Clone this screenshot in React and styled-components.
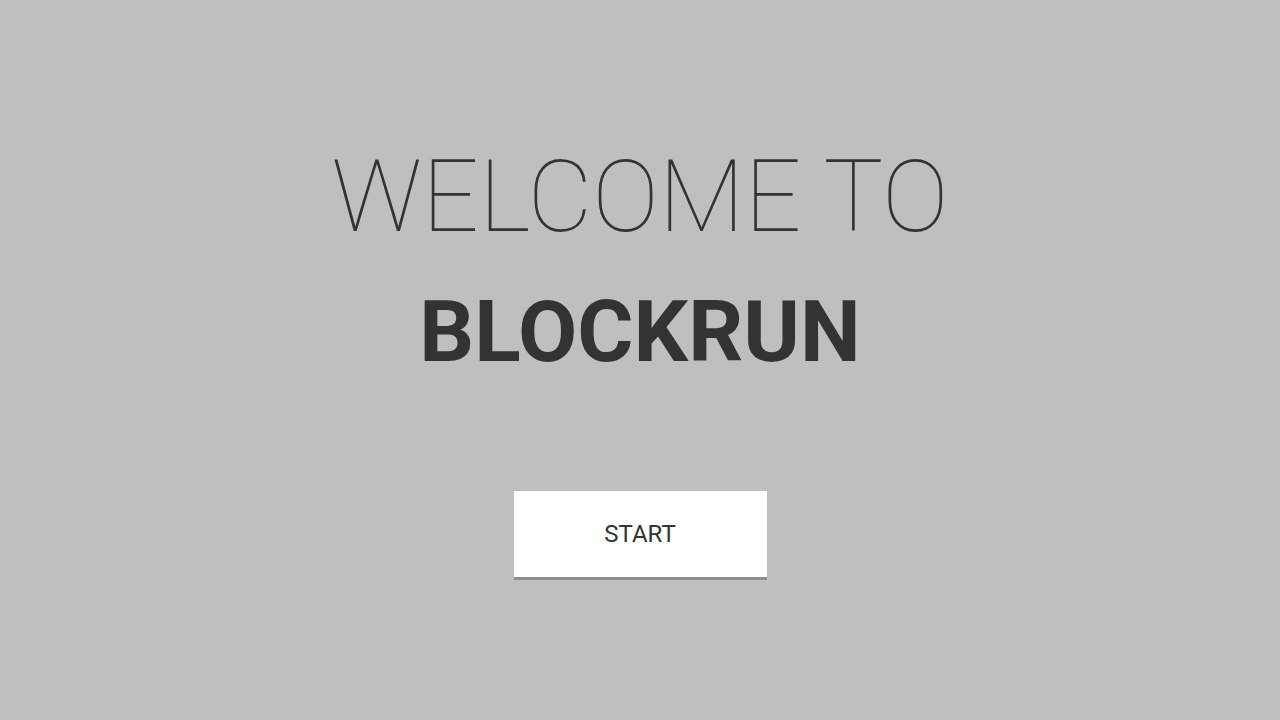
import styled, { createGlobalStyle } from "styled-components";

const Global = createGlobalStyle`
  html, body {
    margin: 0;
    padding: 0;
    background: #bfbfbf;
  }
  body {
    font-family: Roboto, "Liberation Sans", sans-serif;
  }
`;

const Screen = styled.div`
  width: 100vw;
  height: 100vh;
  background: #bfbfbf;
  display: flex;
  flex-direction: column;
  align-items: center;
  padding-top: 147px;
  box-sizing: border-box;
  color: #333333;
`;

const Welcome = styled.h1`
  margin: 0;
  font-family: Roboto, "Liberation Sans", sans-serif;
  font-weight: 100;
  font-size: 100px;
  line-height: 1;
  letter-spacing: 0;
`;

const Title = styled.h2`
  margin: 42px 0 0 0;
  font-family: Roboto, "Liberation Sans", sans-serif;
  font-weight: 700;
  font-size: 86px;
  line-height: 1;
`;

const StartButton = styled.button`
  margin-top: 116px;
  width: 253px;
  height: 89px;
  background: #ffffff;
  border: none;
  border-bottom: 3px solid #8e8e8e;
  font-family: Roboto, "Liberation Sans", sans-serif;
  font-size: 24px;
  font-weight: 400;
  color: #333333;
  cursor: pointer;
  padding: 0;
`;

export default function App() {
  return (
    <>
      <Global />
      <Screen>
        <Welcome>WELCOME TO</Welcome>
        <Title>BLOCKRUN</Title>
        <StartButton>START</StartButton>
      </Screen>
    </>
  );
}
